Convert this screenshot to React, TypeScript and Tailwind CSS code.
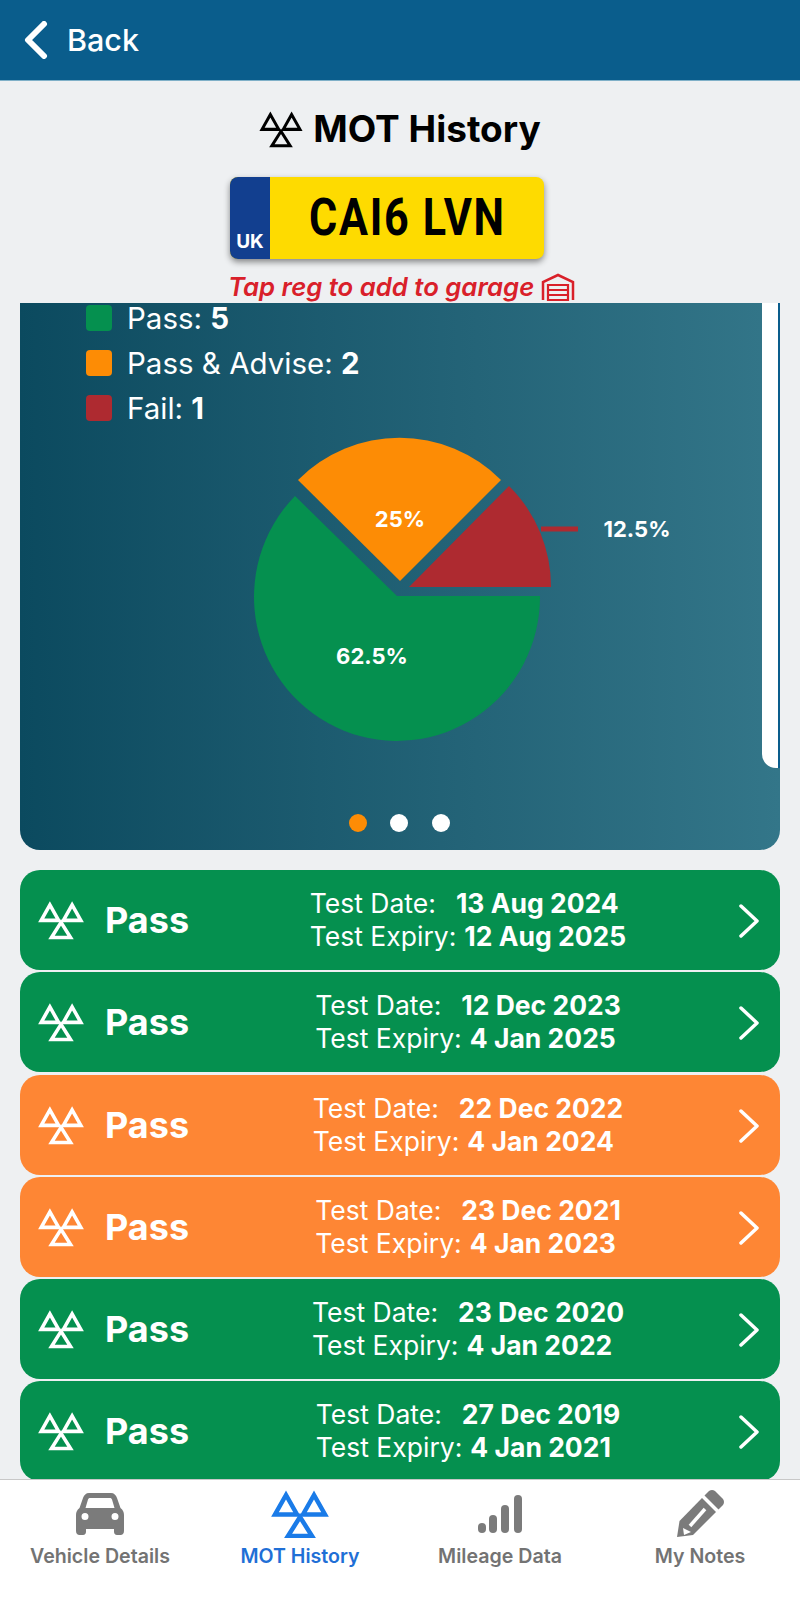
const rows = [
  { color: "bg-[#05904f]", date: "13 Aug 2024", expiry: "12 Aug 2025" },
  { color: "bg-[#05904f]", date: "12 Dec 2023", expiry: "4 Jan 2025" },
  { color: "bg-[#fe8634]", date: "22 Dec 2022", expiry: "4 Jan 2024" },
  { color: "bg-[#fe8634]", date: "23 Dec 2021", expiry: "4 Jan 2023" },
  { color: "bg-[#05904f]", date: "23 Dec 2020", expiry: "4 Jan 2022" },
  { color: "bg-[#05904f]", date: "27 Dec 2019", expiry: "4 Jan 2021" },
];

const legend = [
  { color: "bg-[#05904f]", label: "Pass:", value: "5" },
  { color: "bg-[#fd8c05]", label: "Pass & Advise:", value: "2" },
  { color: "bg-[#ae2a30]", label: "Fail:", value: "1" },
];

const tabs = [
  { label: "Vehicle Details", icon: <CarIcon />, active: false },
  { label: "MOT History", icon: <MotIcon className="w-[58px] h-[48px] text-[#1a7be8]" width={4.5} />, active: true },
  { label: "Mileage Data", icon: <BarsIcon />, active: false },
  { label: "My Notes", icon: <PencilIcon />, active: false },
];

function MotIcon({ className, width = 3 }: { className: string; width?: number }) {
  return (
    <svg viewBox="0 0 58 48" className={className} fill="none" stroke="currentColor" strokeWidth={width}>
      <path d="M15 5 L4 24.5 H26 Z" />
      <path d="M43 5 L32 24.5 H54 Z" />
      <path d="M29 27 L17 46 H41 Z" />
    </svg>
  );
}

function CarIcon() {
  return (
    <svg viewBox="0 0 48 42" className="w-[48px] h-[42px] text-[#7b7b7b]" fill="currentColor">
      <path
        fillRule="evenodd"
        d="M13 0 H35 C38 0 40 2 41 5 L44.5 15 C47 17 48 19 48 22 V38 C48 40.5 46.5 42 44.5 42 H41 C39 42 38 40.5 38 38.5 V36 H10 V38.5 C10 40.5 9 42 7 42 H3.5 C1.5 42 0 40.5 0 38 V22 C0 19 1 17 3.5 15 L7 5 C8 2 10 0 13 0 Z M14 5 C13 5 12.5 5.5 12 6.5 L9.5 15 H38.5 L36 6.5 C35.5 5.5 35 5 34 5 Z M9 20 A3.5 3.5 0 1 0 9 27 A3.5 3.5 0 1 0 9 20 Z M39 20 A3.5 3.5 0 1 0 39 27 A3.5 3.5 0 1 0 39 20 Z"
      />
    </svg>
  );
}

function BarsIcon() {
  return (
    <svg viewBox="0 0 44 38" className="w-[44px] h-[38px] text-[#7b7b7b]" fill="currentColor">
      <rect x="0" y="28" width="8" height="10" rx="4" />
      <rect x="11" y="20" width="8" height="18" rx="4" />
      <rect x="23" y="10" width="8" height="28" rx="4" />
      <rect x="36" y="0" width="8" height="38" rx="4" />
    </svg>
  );
}

function PencilIcon() {
  return (
    <svg viewBox="0 0 48 48" className="w-[48px] h-[48px] text-[#7b7b7b]" fill="currentColor">
      <path d="M1 47 L3.5 31 L26 8 L40 22 L17 45 Z" />
      <path d="M28.5 5.5 L33 1 Q36 -1 39 1 L47 9 Q49 12 47 15 L42.5 19.5 Z" />
      <path d="M14 36 L29 19" stroke="#fff" strokeWidth="3.5" />
      <path d="M7 38 L15 42 L8 45 Z" fill="#fff" />
    </svg>
  );
}

function GarageIcon() {
  return (
    <svg viewBox="0 0 34 28" className="w-[34px] h-[28px] text-[#d9202a]" fill="none" stroke="currentColor" strokeWidth="2.5">
      <path d="M2 27 V9 L17 2 L32 9 V27" />
      <path d="M7 27 V12 H27 V27 Z M7 17 H27 M7 22 H27" strokeWidth="2.2" />
    </svg>
  );
}

function PassRow({ color, date, expiry }: { color: string; date: string; expiry: string }) {
  return (
    <div className={`flex h-[100px] items-center rounded-[20px] pl-[18px] text-white ${color}`}>
      <div className="flex w-[180px] items-center">
        <MotIcon className="h-[40px] w-[46px]" width={4.5} />
        <span className="ml-[21px] text-[36px] font-bold">Pass</span>
      </div>
      <div className="flex w-[500px] justify-center">
        <div className="text-[26.5px] leading-[33px]">
          <div>
            Test Date:<span className="ml-[20px] font-bold">{date}</span>
          </div>
          <div>
            Test Expiry:<span className="ml-[8px] font-bold">{expiry}</span>
          </div>
        </div>
      </div>
      <svg viewBox="0 0 22 34" className="mt-[2px] ml-[20px] h-[34px] w-[22px]" fill="none" stroke="currentColor" strokeWidth="3.5" strokeLinecap="round" strokeLinejoin="round">
        <path d="M3 2 L19 17 L3 32" />
      </svg>
    </div>
  );
}

export default function App() {
  return (
    <div className="flex h-[1600px] w-[800px] flex-col overflow-hidden bg-[#eef0f2] font-['Inter',sans-serif]">
      <header className="flex h-[81px] shrink-0 items-center border-b border-[#7fb0c8] bg-[#0a5d8c] pl-[24px] text-white">
        <svg viewBox="0 0 24 38" className="h-[38px] w-[24px]" fill="none" stroke="currentColor" strokeWidth="6" strokeLinecap="round" strokeLinejoin="round">
          <path d="M20 3 L4 19 L20 35" />
        </svg>
        <span className="ml-[19px] text-[30.5px] font-medium">Back</span>
      </header>

      <main className="min-h-0 flex-1 overflow-hidden">
        <div className="mt-[29px] flex items-center justify-center">
          <MotIcon className="h-[38px] w-[44px] text-black" width={4} />
          <h1 className="ml-[10px] text-[37px] leading-[38px] font-bold text-black">MOT History</h1>
        </div>

        <div className="mt-[29px] ml-[230px] flex h-[82px] w-[314px] overflow-hidden rounded-[8px] bg-[#fedb00] shadow-[0_3px_6px_rgba(0,0,0,0.45)]">
          <div className="flex w-[40px] items-end justify-center bg-[#123f8f] pb-[8px] text-[19px] leading-none font-bold text-white">UK</div>
          <div className="flex flex-1 justify-center font-['Roboto',sans-serif] text-[52px] leading-[82px] font-bold tracking-[2px] text-black">
            <span className="inline-block scale-x-[0.83] whitespace-pre">CAI6 LVN</span>
          </div>
        </div>

        <div className="mt-[14px] flex h-[28px] items-center gap-[7px] pl-[228px] text-[25.7px] font-semibold text-[#d9202a] italic">
          <span>Tap reg to add to garage</span>
          <GarageIcon />
        </div>

        <section className="relative mx-[20px] mt-[2px] h-[547px] rounded-b-[20px] bg-gradient-to-r from-[#0b4a5f] to-[#337689]">
          <div className="absolute top-0 right-0 h-[465px] w-[18px] rounded-bl-[14px] border-r-2 border-[#0a5d8c] bg-white" />
          <ul className="flex flex-col gap-[19px] pt-[2px] pl-[66px] text-white">
            {legend.map((item) => (
              <li key={item.label} className="flex h-[26px] items-center">
                <span className={`h-[26px] w-[26px] rounded-[4px] ${item.color}`} />
                <span className="ml-[15px] text-[29.5px]">
                  {item.label} <b>{item.value}</b>
                </span>
              </li>
            ))}
          </ul>

          <svg viewBox="20 430 760 330" className="mt-[9px] block h-[330px] w-[760px]">
            <path d="M295 496 A143 144 0 1 0 540 596 H397 Z" fill="#05904f" />
            <path d="M400 581 L298 480 A143 143 0 0 1 501 480 Z" fill="#fd8c05" />
            <path d="M409 587 L509 486 A142 142 0 0 1 551 587 Z" fill="#ae2a30" />
            <path d="M541 529 H578" stroke="#ae2a30" strokeWidth="5" />
            <g fill="#fff" fontSize="22" fontWeight="700" textAnchor="middle">
              <text x="400" y="527">25%</text>
              <text x="372" y="664">62.5%</text>
              <text x="637" y="537">12.5%</text>
            </g>
          </svg>

          <div className="mt-[54px] flex justify-center gap-[23.5px] pr-[2px]">
            <span className="h-[18px] w-[18px] rounded-full bg-[#fd8c05]" />
            <span className="h-[18px] w-[18px] rounded-full bg-white" />
            <span className="h-[18px] w-[18px] rounded-full bg-white" />
          </div>
        </section>

        <div className="mx-[20px] mt-[20px] flex flex-col gap-[2.3px]">
          {rows.map((row) => (
            <PassRow key={row.date} {...row} />
          ))}
        </div>
      </main>

      <nav className="grid h-[121px] shrink-0 grid-cols-4 border-t border-[#c8c8c8] bg-white">
        {tabs.map((tab) => (
          <div key={tab.label} className="flex flex-col items-center pt-[10px]">
            <div className="flex h-[48px] items-center justify-center">{tab.icon}</div>
            <span className={`mt-[4px] text-[19.6px] font-semibold ${tab.active ? "text-[#1f6fd6]" : "text-[#737373]"}`}>{tab.label}</span>
          </div>
        ))}
      </nav>
    </div>
  );
}
